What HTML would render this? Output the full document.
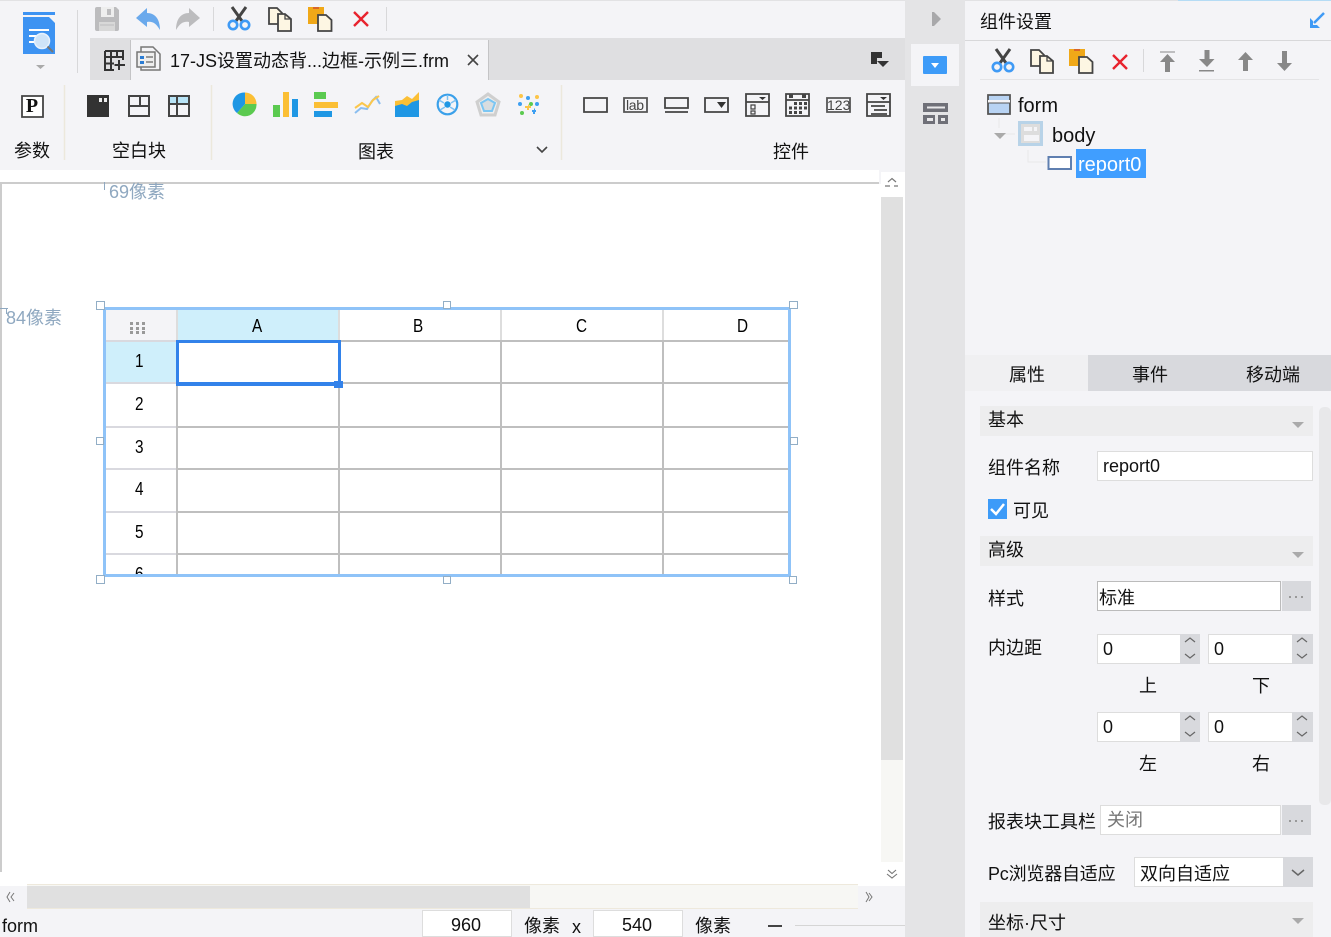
<!DOCTYPE html>
<html><head><meta charset="utf-8"><style>
html,body{margin:0;padding:0;width:1331px;height:937px;overflow:hidden;background:#f4f4f7}
body{position:relative;font-family:"Liberation Sans","Noto Sans CJK SC",sans-serif;color:#111}
.b{position:absolute;box-sizing:border-box}
.t{position:absolute;white-space:nowrap;font-size:18px;line-height:24px;height:24px}
.g{transform:scaleX(.85);transform-origin:left top;color:#000}
svg{position:absolute;left:0;top:0}
</style></head><body>
<div class="b" style="left:0;top:0;width:1331px;height:1px;background:#e2e2e4"></div>
<div class="b" style="left:90px;top:38px;width:815px;height:42px;background:#dfdfe1"></div>
<div class="b" style="left:130px;top:40px;width:359px;height:40px;background:#f4f4f7;border-right:1px solid #c4c4c6;border-left:1px solid #c4c4c6"></div>
<div class="b" style="left:0;top:170px;width:879px;height:716px;background:#fff"></div>
<div class="b" style="left:881px;top:172px;width:24px;height:714px;background:#fff"></div>
<div class="b" style="left:879px;top:184px;width:2px;height:702px;background:#fff"></div>
<div class="b" style="left:0;top:182px;width:879px;height:2px;background:#ccc"></div>
<div class="b" style="left:0;top:182px;width:2px;height:690px;background:#ccc"></div>
<div class="b" style="left:881px;top:197px;width:22px;height:563px;background:#e0e0e0"></div>
<div class="b" style="left:881px;top:760px;width:22px;height:102px;background:#f7f7f4"></div>
<div class="b" style="left:27px;top:884px;width:831px;height:25px;background:#f7f7f4;border-top:1px solid #eee9dc;border-bottom:1px solid #eee9dc"></div>
<div class="b" style="left:27px;top:886px;width:503px;height:22px;background:#e0e0e0"></div>
<div class="b" style="left:0;top:909px;width:905px;height:28px;background:#f4f4f7"></div>
<div class="b" style="left:422px;top:910px;width:90px;height:27px;background:#fff;border:1px solid #ddd"></div>
<div class="b" style="left:593px;top:910px;width:90px;height:27px;background:#fff;border:1px solid #ddd"></div>
<div class="b" style="left:768px;top:925px;width:14px;height:2px;background:#444"></div>
<div class="b" style="left:795px;top:925px;width:110px;height:1px;background:#d5d5d5"></div>
<div class="b" style="left:905px;top:0;width:60px;height:937px;background:#e4e4e6"></div>
<div class="b" style="left:911px;top:44px;width:48px;height:42px;background:#f4f4f7"></div>
<div class="b" style="left:965px;top:0;width:366px;height:937px;background:#f4f4f7"></div>
<div class="b" style="left:965px;top:0;width:366px;height:1px;background:#e2e2e4"></div>
<div class="b" style="left:1178px;top:0;width:153px;height:1px;background:#b5dcf5"></div>
<div class="b" style="left:965px;top:40px;width:366px;height:1px;background:#d8d8da"></div>
<div class="b" style="left:980px;top:79px;width:339px;height:1px;background:#e4e4e6"></div>
<div class="b" style="left:1076px;top:149px;width:70px;height:29px;background:#409eff"></div>
<div class="b" style="left:1088px;top:355px;width:243px;height:36px;background:#d8d9dd"></div>
<div class="b" style="left:965px;top:355px;width:123px;height:36px;background:#f0f0f2"></div>
<div class="b" style="left:980px;top:406px;width:333px;height:30px;background:#ededee"></div>
<div class="b" style="left:980px;top:536px;width:333px;height:30px;background:#ededee"></div>
<div class="b" style="left:980px;top:902px;width:333px;height:35px;background:#ededee"></div>
<div class="b" style="left:1319px;top:407px;width:12px;height:398px;background:#e8e8ea;border-radius:5px"></div>
<div class="b" style="left:1097px;top:451px;width:216px;height:30px;background:#fff;border:1px solid #ddd"></div>
<div class="b" style="left:988px;top:499px;width:19px;height:20px;background:#3d9bf8"></div>
<div class="b" style="left:1097px;top:581px;width:184px;height:30px;background:#fff;border:1px solid #bbb"></div>
<div class="b" style="left:1282px;top:581px;width:29px;height:30px;background:#d8d9dd"></div>
<div class="b" style="left:1097px;top:634px;width:84px;height:30px;background:#fff;border:1px solid #ddd"></div>
<div class="b" style="left:1180px;top:634px;width:20px;height:30px;background:#d8d9dd"></div>
<div class="b" style="left:1208px;top:634px;width:85px;height:30px;background:#fff;border:1px solid #ddd"></div>
<div class="b" style="left:1292px;top:634px;width:21px;height:30px;background:#d8d9dd"></div>
<div class="b" style="left:1097px;top:712px;width:84px;height:30px;background:#fff;border:1px solid #ddd"></div>
<div class="b" style="left:1180px;top:712px;width:20px;height:30px;background:#d8d9dd"></div>
<div class="b" style="left:1208px;top:712px;width:85px;height:30px;background:#fff;border:1px solid #ddd"></div>
<div class="b" style="left:1292px;top:712px;width:21px;height:30px;background:#d8d9dd"></div>
<div class="b" style="left:1100px;top:805px;width:181px;height:30px;background:#fff;border:1px solid #ddd"></div>
<div class="b" style="left:1282px;top:805px;width:29px;height:30px;background:#d8d9dd"></div>
<div class="b" style="left:1134px;top:857px;width:150px;height:30px;background:#fff;border:1px solid #ddd"></div>
<div class="b" style="left:1283px;top:857px;width:30px;height:30px;background:#d8d9dd"></div>

<!-- table -->
<div class="b" style="left:106px;top:310px;width:70px;height:30px;background:#f4f4f7"></div>
<div class="b" style="left:178px;top:310px;width:160px;height:30px;background:#cfeffb"></div>
<div class="b" style="left:106px;top:342px;width:70px;height:40px;background:#cfeffb"></div>
<div class="b" style="left:106px;top:340px;width:70px;height:2px;background:#d9d9df"></div>
<div class="b" style="left:106px;top:382px;width:70px;height:2px;background:#d9d9df"></div>
<div class="b" style="left:106px;top:426px;width:70px;height:2px;background:#d9d9df"></div>
<div class="b" style="left:106px;top:468px;width:70px;height:2px;background:#d9d9df"></div>
<div class="b" style="left:106px;top:511px;width:70px;height:2px;background:#d9d9df"></div>
<div class="b" style="left:106px;top:553px;width:70px;height:2px;background:#d9d9df"></div>
<div class="b" style="left:176px;top:340px;width:613px;height:2px;background:#bfbfbf"></div>
<div class="b" style="left:176px;top:382px;width:613px;height:2px;background:#bfbfbf"></div>
<div class="b" style="left:176px;top:426px;width:613px;height:2px;background:#bfbfbf"></div>
<div class="b" style="left:176px;top:468px;width:613px;height:2px;background:#bfbfbf"></div>
<div class="b" style="left:176px;top:511px;width:613px;height:2px;background:#bfbfbf"></div>
<div class="b" style="left:176px;top:553px;width:613px;height:2px;background:#bfbfbf"></div>
<div class="b" style="left:176px;top:310px;width:2px;height:30px;background:#ddd"></div>
<div class="b" style="left:338px;top:310px;width:2px;height:30px;background:#ddd"></div>
<div class="b" style="left:500px;top:310px;width:2px;height:30px;background:#ddd"></div>
<div class="b" style="left:662px;top:310px;width:2px;height:30px;background:#ddd"></div>
<div class="b" style="left:176px;top:340px;width:2px;height:235px;background:#bfbfbf"></div>
<div class="b" style="left:338px;top:340px;width:2px;height:235px;background:#bfbfbf"></div>
<div class="b" style="left:500px;top:340px;width:2px;height:235px;background:#bfbfbf"></div>
<div class="b" style="left:662px;top:340px;width:2px;height:235px;background:#bfbfbf"></div>
<div class="t g" style="left:135px;top:562px;height:12px;overflow:hidden">6</div>
<div class="b" style="left:103px;top:307px;width:688px;height:270px;border:3px solid #8fc3f8"></div>
<div class="b" style="left:176px;top:340px;width:165px;height:46px;border:3px solid #3282ea;border-bottom-width:4px"></div>
<div class="b" style="left:334px;top:381px;width:9px;height:7px;background:#3282ea"></div>
<div class="b" style="left:96px;top:301px;width:9px;height:9px;background:#fff;border:1px solid #92aec6"></div>
<div class="b" style="left:443px;top:301px;width:8px;height:8px;background:#fff;border:1px solid #92aec6"></div>
<div class="b" style="left:789px;top:301px;width:9px;height:8px;background:#fff;border:1px solid #92aec6"></div>
<div class="b" style="left:96px;top:437px;width:8px;height:8px;background:#fff;border:1px solid #92aec6"></div>
<div class="b" style="left:790px;top:437px;width:8px;height:8px;background:#fff;border:1px solid #92aec6"></div>
<div class="b" style="left:96px;top:575px;width:9px;height:9px;background:#fff;border:1px solid #92aec6"></div>
<div class="b" style="left:443px;top:576px;width:8px;height:8px;background:#fff;border:1px solid #92aec6"></div>
<div class="b" style="left:789px;top:576px;width:8px;height:8px;background:#fff;border:1px solid #92aec6"></div>

<svg width="1331" height="937" viewBox="0 0 1331 937" fill="none">
<defs>
<symbol id="cut" viewBox="0 0 24 24" overflow="visible"><path d="M5 0L15 14M19 0L9 14" stroke="#444" stroke-width="3"/><circle cx="6" cy="18" r="4.200" stroke="#3f9af5" stroke-width="2.600"/><circle cx="18" cy="18" r="4.200" stroke="#3f9af5" stroke-width="2.600"/></symbol>
<symbol id="copy" viewBox="0 0 24 24" overflow="visible"><path d="M1 1H9L14 6V17H1Z" fill="#fdf6e3" stroke="#444" stroke-width="1.800"/><path d="M10 7H17L23 12V24H10Z" fill="#fdf6e3" stroke="#444" stroke-width="1.800"/><path d="M17 7V12H23" stroke="#444" stroke-width="1.300"/></symbol>
<symbol id="paste" viewBox="0 0 24 24" overflow="visible"><path d="M0 0H16V17H0Z" fill="#f0a818"/><path d="M5 0H11V2H5Z" fill="#d9662a"/><path d="M10 8H18L23.500 13V24H10Z" fill="#fdf6e3" stroke="#444" stroke-width="1.800"/></symbol>
<symbol id="del" viewBox="0 0 16 16" overflow="visible"><path d="M1 1L15 15M15 1L1 15" stroke="#e8232e" stroke-width="2.400"/></symbol>
</defs>
<!-- logo -->
<path d="M23 12H55V15H23Z" fill="#3d93f2"/><path d="M23 17H49L55 23V54H23Z" fill="#3d93f2"/>
<path d="M29 30H49M29 36H37M29 42H35" stroke="#fff" stroke-width="2"/>
<circle cx="42" cy="41" r="7.500" fill="#cfe4f8" stroke="#e8f2fc" stroke-width="1.500"/><path d="M47.500 46.500L53 52" stroke="#777" stroke-width="2"/>
<path d="M36 65H45L40.500 69Z" fill="#aaa"/>
<path d="M77.500 10V73M213.500 7V31M386.500 7V31" stroke="#d8d8da"/>
<!-- save -->
<path d="M95 9Q95 7 97 7H116L119 10V29Q119 31 117 31H97Q95 31 95 29Z" fill="#bcbcbe"/><path d="M101 7H114V17H101Z" fill="#eee"/><path d="M107 9H111V15H107Z" fill="#bcbcbe"/><path d="M99 22H115V31H99Z" fill="#d8d8d8"/><path d="M100 25H114" stroke="#bcbcbe"/>
<!-- undo redo -->
<path d="M136 18L147 8V13C155 13 160 19 160 30C156 23 152 21 147 22V27Z" fill="#6aa9ec"/>
<path d="M200 18L189 8V13C181 13 176 19 176 30C180 23 184 21 189 22V27Z" fill="#bcbcbe"/>
<use href="#cut" x="227" y="7" width="24" height="24"/><use href="#copy" x="268" y="7" width="24" height="24"/><use href="#paste" x="308" y="7" width="24" height="24"/><use href="#del" x="353" y="11" width="16" height="16"/>
<use href="#cut" x="991" y="49" width="24" height="24"/><use href="#copy" x="1030" y="49" width="24" height="24"/><use href="#paste" x="1069" y="49" width="24" height="24"/><use href="#del" x="1112" y="54" width="16" height="16"/>
<path d="M1143.500 49V72" stroke="#d8d8da"/>
<!-- move arrows -->
<g fill="#888"><path d="M1160 51.500H1175V52.500H1160ZM1167.500 54L1175 62H1170V72H1165V62H1160Z"/><path d="M1199 70H1214V71.500H1199ZM1207 67L1199 59H1204.500V50H1209.500V59H1214.500Z"/><path d="M1245.500 52L1253 60H1248V71H1243V60H1238Z"/><path d="M1284.500 71L1277 63H1282V51H1287V63H1292Z"/></g>
<!-- tab icons -->
<path d="M105 51H123V60M105 51V70H114M105 57H123M105 63.500H114M111 51V70M117 51V57" stroke="#333" stroke-width="2"/><path d="M119 60V70M114.500 65H125" stroke="#333" stroke-width="2"/>
<path d="M141 47H153L160 54V70H141Z" fill="#f4f4f7" stroke="#777" stroke-width="1.500"/><path d="M137 52H155V67H137Z" fill="#eee" stroke="#777" stroke-width="1.500"/><path d="M140 56H144V59H140ZM140 61H144V64H140Z" fill="#2b7cd3"/><path d="M146 57H153M146 62H153" stroke="#999" stroke-width="2"/>
<path d="M468 55L478 65M478 55L468 65" stroke="#444" stroke-width="1.600"/>
<path d="M871 52H882V58H877V64H871Z" fill="#333"/><path d="M877 61H889L883 67Z" fill="#333"/>
<!-- rail -->
<path d="M932 12H934L941 19L934 26H932Z" fill="#a8a8aa"/>
<rect x="923" y="56" width="24" height="18" rx="1" fill="#3d9bf8"/><path d="M931 63H939L935 68Z" fill="#fff"/>
<path d="M923 103H948V112H923ZM923 115H935V124H923ZM938 115H948V124H938Z" fill="#6f7078"/><path d="M927 106.500H945V108.500H927ZM927 118H933V121H927ZM941 118H945V121H941Z" fill="#e8e8ea"/>
<!-- P block icons -->
<path d="M22 96H43V117H22Z" fill="#fff" stroke="#444" stroke-width="1.800"/>
<path d="M64.500 85V160M211.500 85V160M561.500 85V160" stroke="#ece8dc" stroke-width="1.500"/>
<path d="M87 95H109V117H87Z" fill="#333"/><path d="M99 98H102V102H99ZM104 98H107V102H104Z" fill="#eee"/>
<path d="M129 96H149V116H129ZM129 106H149M140 96V106" stroke="#444" stroke-width="2"/>
<path d="M169 96H189V104H169Z" fill="#b8e4f7"/><path d="M169 96H189V116H169ZM169 104H189M177 96V116" stroke="#444" stroke-width="2"/>
<!-- charts -->
<path d="M245 104V92.500A11.500 11.500 0 0 1 256.500 104Z" fill="#fbbf35"/><path d="M245 104H256.500A11.500 11.500 0 0 1 237 113Z" fill="#5bca50"/><path d="M245 104L237 113A11.500 11.500 0 0 1 245 92.500Z" fill="#1f97e4"/>
<path d="M273 105H280V117H273Z" fill="#5bca50"/><path d="M283 92H289V117H283Z" fill="#fbbf35"/><path d="M292 99H298V117H292Z" fill="#1f97e4"/>
<path d="M314 92H326V99H314Z" fill="#5bca50"/><path d="M314 102H338V108H314Z" fill="#fbbf35"/><path d="M314 111H332V117H314Z" fill="#1f97e4"/>
<path d="M355 113L361 108L367 109L372 101L376 97L380 104" stroke="#89bdf0" stroke-width="2"/><path d="M355 108L362 103L368 107L373 100L379 96" stroke="#fbc74c" stroke-width="2"/>
<path d="M395 101L402 100L407 96L412 99L419 92V117H395Z" fill="#fbbf35"/><path d="M395 106L402 104L407 106L412 102L419 100V117H395Z" fill="#1f97e4"/>
<circle cx="447.500" cy="104.500" r="9.800" stroke="#3aa0ea" stroke-width="2.200"/><circle cx="447.500" cy="104.500" r="3.200" fill="#1f97e4"/><path d="M447.500 95V100M439 100L444 103M456 100L451 103M440 110L445 107M455 110L450 107" stroke="#7cc1f3" stroke-width="1.500"/>
<path d="M488 94L499 102L495 115H481L477 102Z" fill="#eee" stroke="#cfcfcf" stroke-width="3"/><path d="M488 99L495 103L492 111H484L481 103Z" fill="#d8dde0" stroke="#7cc6f3" stroke-width="2"/>
<g fill="#3d9ff2"><circle cx="528" cy="98" r="2"/><circle cx="520" cy="104" r="2"/><circle cx="537" cy="104" r="2"/><path d="M532 110H534V108.500H535V110H536V112H535V114H533V112H532Z"/></g><g fill="#fcc548"><circle cx="521" cy="96" r="2"/><circle cx="537" cy="97" r="2"/><path d="M526 106H528V104.500H529V106H531V108H529V110H527V108H525V106Z"/></g><g fill="#5bca50"><circle cx="531" cy="104" r="2"/><circle cx="522" cy="113" r="2"/></g>
<path d="M537 147L542 152L547 147" stroke="#444" stroke-width="1.600"/>
<!-- controls -->
<g stroke="#444" stroke-width="1.800">
<path d="M584 98H607V112H584Z"/><path d="M624 98H647V112H624Z" stroke="#555"/>
<path d="M665 98H688V108H665ZM665 112H688"/>
<path d="M705 98H728V112H705Z"/>
<path d="M746 94H769V116H746ZM746 102H769"/><path d="M751 105H755V109H751ZM751 111H755V114H751Z" stroke-width="1.200"/>
<path d="M786 94H809V116H786ZM786 100H809"/>
<path d="M827 98H850V112H827Z" stroke="#555"/>
<path d="M867 94H890V116H867ZM867 102H890M871 106H885M874 110H887M871 114H887"/>
</g>
<path d="M717 102H726L721.500 108Z" fill="#333"/><path d="M759 97H766L762.500 100Z" fill="#333"/><path d="M880 97H887L883.500 100Z" fill="#333"/>
<path d="M789 94H793V98H789ZM802 94H806V98H802Z" fill="#444"/>
<g fill="#444"><rect x="794" y="102" width="3" height="3"/><rect x="799" y="102" width="3" height="3"/><rect x="804" y="102" width="3" height="3"/><rect x="789" y="106.500" width="3" height="3"/><rect x="794" y="106.500" width="3" height="3"/><rect x="799" y="106.500" width="3" height="3"/><rect x="804" y="106.500" width="3" height="3"/><rect x="789" y="111" width="3" height="3"/><rect x="794" y="111" width="3" height="3"/><rect x="799" y="111" width="3" height="3"/></g>
<!-- tree -->
<path d="M988 95H1010V114H988Z" fill="#b8d3f3" stroke="#555" stroke-width="1.800"/><path d="M988 100H1010V103H988Z" fill="#f4f4f7"/><path d="M988 103H1010" stroke="#555"/>
<path d="M999 118V128M1003 134H1015M1028 150V162H1046" stroke="#e8e8ea"/>
<path d="M994 133H1006L1000 139Z" fill="#aaa"/>
<path d="M1018 121H1043V146H1018Z" fill="#b8d3e8"/><path d="M1021 124H1040V143H1021Z" fill="#ddd"/><path d="M1024 127H1032V131H1024ZM1024 135H1039V141H1024ZM1034 127H1037V131H1034Z" fill="#f4f4f7"/>
<path d="M1048.500 157H1071V169H1048.500Z" fill="#fff" stroke="#5f7fb0" stroke-width="2"/>
<path d="M1324 13L1314 23" stroke="#3f9af5" stroke-width="2.500"/><path d="M1310 18V28H1320L1317 25H1313V21Z" fill="#3f9af5"/>
<!-- section arrows -->
<path d="M1292 422H1304L1298 428Z" fill="#aaa"/><path d="M1292 552H1304L1298 558Z" fill="#aaa"/><path d="M1292 918H1304L1298 924Z" fill="#aaa"/>
<path d="M991 509L996 514L1004 504" stroke="#fff" stroke-width="2.500"/>
<path d="M1289 597H1291M1295 597H1297M1301 597H1303M1289 821H1291M1295 821H1297M1301 821H1303" stroke="#999" stroke-width="2"/>
<g stroke="#666" stroke-width="1.200"><path d="M1185 642L1190 638L1195 642M1185 654L1190 658L1195 654M1297 642L1302 638L1307 642M1297 654L1302 658L1307 654M1185 720L1190 716L1195 720M1185 732L1190 736L1195 732M1297 720L1302 716L1307 720M1297 732L1302 736L1307 732"/><path d="M1292 870L1298 875L1304 870" stroke-width="1.500"/></g>
<!-- grid dots -->
<g fill="#999"><rect x="130" y="322" width="3" height="3"/><rect x="136" y="322" width="3" height="3"/><rect x="142" y="322" width="3" height="3"/><rect x="130" y="327" width="3" height="3"/><rect x="136" y="327" width="3" height="3"/><rect x="142" y="327" width="3" height="3"/><rect x="130" y="331" width="3" height="3"/><rect x="136" y="331" width="3" height="3"/><rect x="142" y="331" width="3" height="3"/></g>
<!-- ticks -->
<path d="M104.500 182V190" stroke="#8fa8c0"/><path d="M0 308.500H8M6.500 308V314" stroke="#8fa8c0"/>
<!-- scroll arrows -->
<g stroke="#777" stroke-width="1.200"><path d="M888 182L892 178.500L896 182M885 186H890M894 186H898"/><path d="M888 870L892 873.500L896 870M887 874L892 878L897 874" stroke-width="1.100"/><path d="M10 892L7 897L10 902M14 893L11 897L14 901" stroke-width="1"/><path d="M866 892L869 897L866 902M869 893L872 897L869 901" stroke-width="1"/></g>
</svg>

<!-- text -->
<div class="t" style="left:25px;top:94px;width:14px;text-align:center;font:bold 20px/24px 'Liberation Serif',serif">P</div>
<div class="t" style="left:170px;top:49px;font-size:18px">17-JS设置动态背...边框-示例三.frm</div>
<div class="t" style="left:14px;top:139px">参数</div>
<div class="t" style="left:112px;top:139px">空白块</div>
<div class="t" style="left:358px;top:140px">图表</div>
<div class="t" style="left:773px;top:140px">控件</div>
<div class="t" style="left:626px;top:93px;font-size:14px;color:#444;letter-spacing:-.3px">lab</div>
<div class="t" style="left:827px;top:93px;font-size:14px;color:#444">123</div>
<div class="t" style="left:109px;top:180px;color:#8fa8c0">69像素</div>
<div class="t" style="left:6px;top:306px;color:#8fa8c0">84像素</div>
<div class="t g" style="left:252px;top:314px">A</div>
<div class="t g" style="left:413px;top:314px">B</div>
<div class="t g" style="left:576px;top:314px">C</div>
<div class="t g" style="left:737px;top:314px">D</div>
<div class="t g" style="left:135px;top:349px">1</div>
<div class="t g" style="left:135px;top:392px">2</div>
<div class="t g" style="left:135px;top:435px">3</div>
<div class="t g" style="left:135px;top:477px">4</div>
<div class="t g" style="left:135px;top:520px">5</div>
<div class="t" style="left:2px;top:914px">form</div>
<div class="t" style="left:451px;top:913px">960</div>
<div class="t" style="left:622px;top:913px">540</div>
<div class="t" style="left:524px;top:914px">像素</div>
<div class="t" style="left:572px;top:915px">x</div>
<div class="t" style="left:695px;top:914px">像素</div>
<div class="t" style="left:980px;top:10px">组件设置</div>
<div class="t" style="left:1018px;top:94px;font-size:20px">form</div>
<div class="t" style="left:1052px;top:124px;font-size:20px">body</div>
<div class="t" style="left:1078px;top:153px;font-size:20px;color:#fff">report0</div>
<div class="t" style="left:1009px;top:363px">属性</div>
<div class="t" style="left:1132px;top:363px">事件</div>
<div class="t" style="left:1246px;top:363px">移动端</div>
<div class="t" style="left:988px;top:408px">基本</div>
<div class="t" style="left:988px;top:456px">组件名称</div>
<div class="t" style="left:1103px;top:454px">report0</div>
<div class="t" style="left:1013px;top:499px">可见</div>
<div class="t" style="left:988px;top:538px">高级</div>
<div class="t" style="left:988px;top:587px">样式</div>
<div class="t" style="left:1099px;top:586px">标准</div>
<div class="t" style="left:988px;top:636px">内边距</div>
<div class="t" style="left:1103px;top:637px">0</div>
<div class="t" style="left:1214px;top:637px">0</div>
<div class="t" style="left:1103px;top:715px">0</div>
<div class="t" style="left:1214px;top:715px">0</div>
<div class="t" style="left:1139px;top:674px">上</div>
<div class="t" style="left:1252px;top:674px">下</div>
<div class="t" style="left:1139px;top:752px">左</div>
<div class="t" style="left:1252px;top:752px">右</div>
<div class="t" style="left:988px;top:810px">报表块工具栏</div>
<div class="t" style="left:1107px;top:808px;color:#777">关闭</div>
<div class="t" style="left:988px;top:862px;letter-spacing:-.2px">Pc浏览器自适应</div>
<div class="t" style="left:1140px;top:862px">双向自适应</div>
<div class="t" style="left:988px;top:911px">坐标·尺寸</div>
</body></html>
